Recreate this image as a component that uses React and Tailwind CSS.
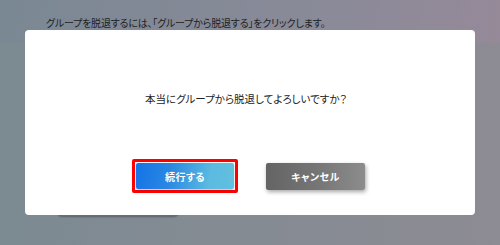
const jp = "font-['Noto_Sans_CJK_JP','Noto_Sans',sans-serif] [font-feature-settings:'palt']";

export default function App() {
    return (
        <div className={`relative w-[500px] h-[245px] overflow-hidden bg-[linear-gradient(100deg,#7a8893_0%,#8a8a98_60%,#988998_100%)] ${jp}`}>
            {/* page behind the overlay */}
            <div className="absolute left-0 right-0 top-[43px] bottom-0 bg-[linear-gradient(90deg,#7c8a92_0%,#858b93_50%,#8d8b93_100%)]" />
            <p className="relative pl-[46px] pt-[16px] text-[10px] leading-[14px] tracking-[-0.2px] text-[#1f1f1f]">
                グループを脱退するには、「グループから脱退する」をクリックします。
            </p>
            <div className="absolute left-[58px] top-[208px] w-[120px] h-[8px] rounded-sm bg-[#5f7085] shadow-[0_1px_2px_rgba(0,0,0,0.3)]" />

            {/* dialog */}
            <div className="absolute left-[25px] top-[30px] w-[450px] h-[185px] rounded-[4px] bg-white flex flex-col items-center">
                <p className="mt-[61px] mr-[8px] text-[10.5px] leading-[16px] text-[#222]">
                    本当にグループから脱退してよろしいですか？
                </p>
                <div className="mt-[52px] flex items-center gap-[28px]">
                    <div className="border-[3px] border-[#ff0000] p-[1px] rounded-[2px]">
                        <button className="block w-[98px] h-[26px] rounded-[2px] bg-[linear-gradient(100deg,#1473e6_0%,#2a88e2_35%,#5bbbe0_75%,#62c0df_100%)] text-white text-[10px] font-bold tracking-[0.5px] shadow-[0_1px_2px_rgba(0,0,0,0.25)]">
                            続行する
                        </button>
                    </div>
                    <button className="mr-[3px] w-[99px] h-[27px] rounded-[2px] bg-[linear-gradient(90deg,#646464_0%,#757575_50%,#8c8c8c_100%)] text-white text-[10px] font-bold tracking-[0.5px] shadow-[1px_2px_4px_rgba(0,0,0,0.35)]">
                        キャンセル
                    </button>
                </div>
            </div>
        </div>
    );
}
